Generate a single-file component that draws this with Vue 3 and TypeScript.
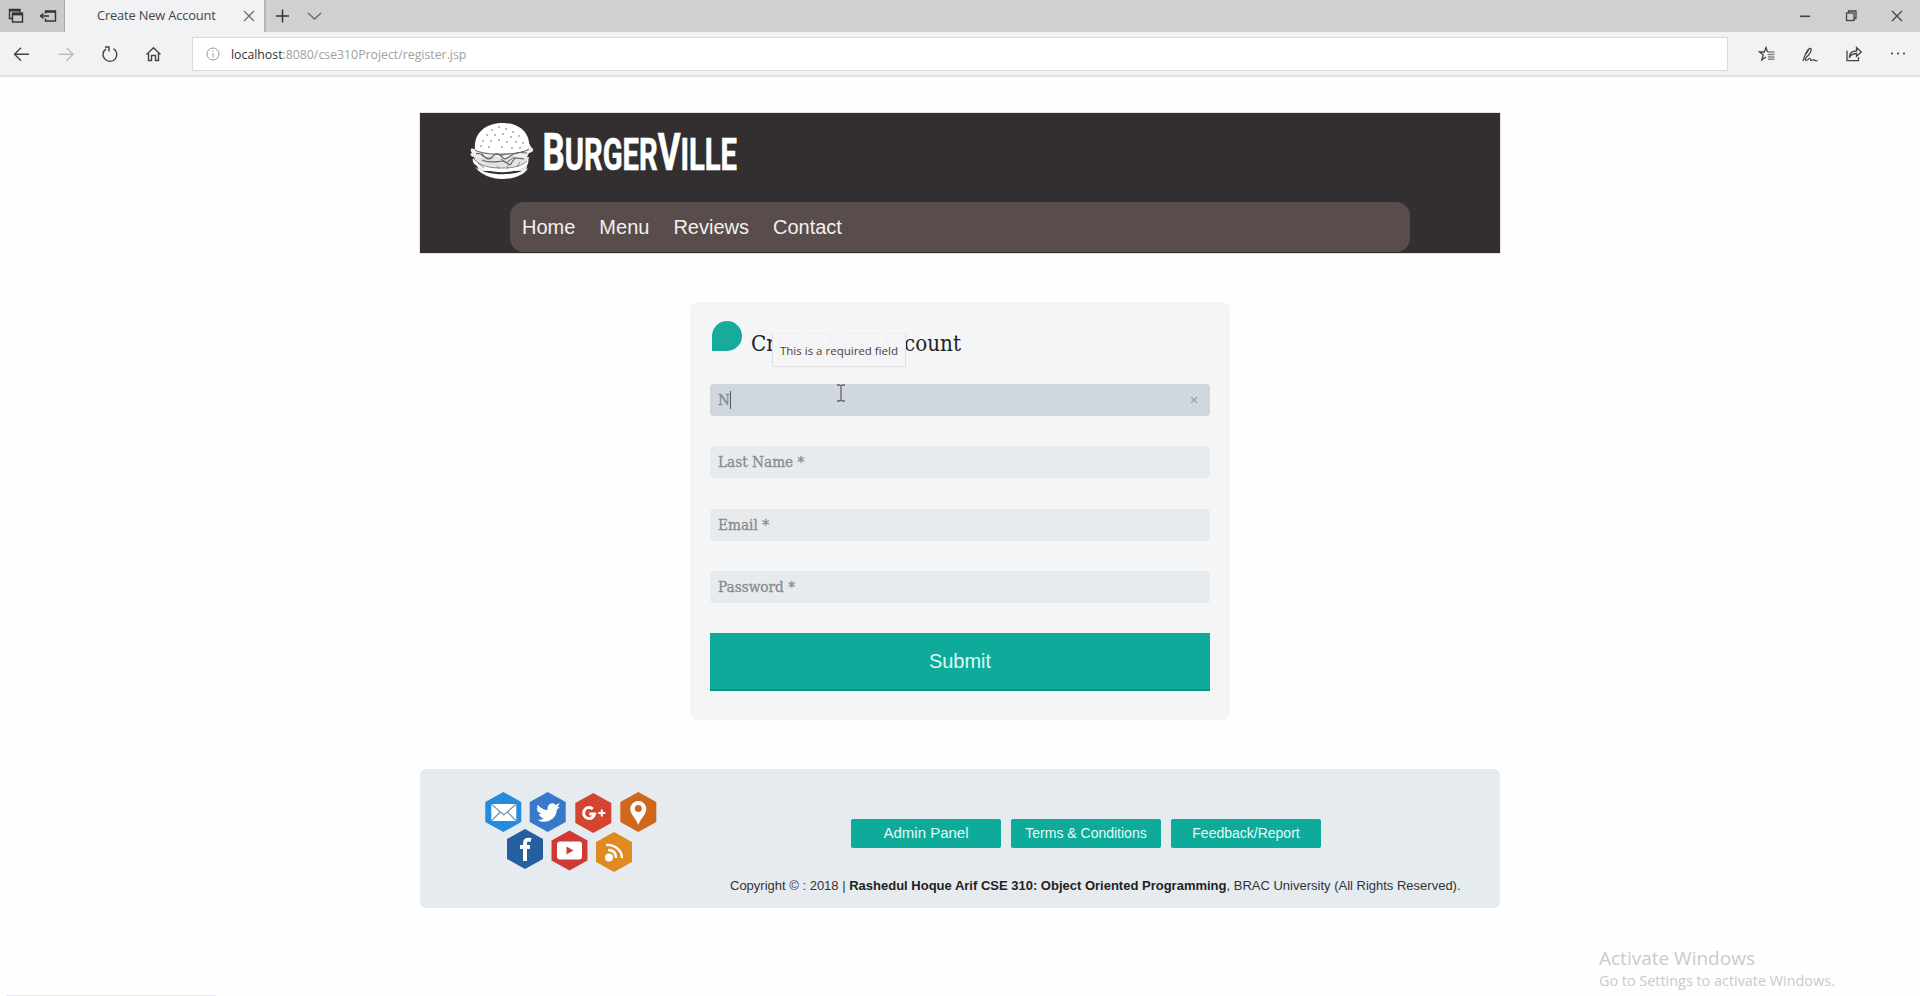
<script setup lang="ts">
import { ref } from 'vue'

interface Field {
  name: string
  placeholder: string
}

const navLinks: string[] = ['Home', 'Menu', 'Reviews', 'Contact']
const fields: Field[] = [
  { name: 'last', placeholder: 'Last Name *' },
  { name: 'email', placeholder: 'Email *' },
  { name: 'password', placeholder: 'Password *' },
]
const firstName = ref('N')
const seeds: number[][] = [
  [20, 7], [27, 4], [34, 6], [41, 9], [15, 12], [23, 12], [31, 11], [39, 14], [47, 13],
  [11, 18], [19, 18], [27, 17], [35, 19], [44, 19], [51, 20], [9, 23], [17, 24], [30, 24], [40, 25], [48, 25],
]
</script>

<template>
  <div class="window">
    <div class="tabstrip">
      <div class="tab-tools">
        <svg width="64" height="32" viewBox="0 0 64 32" fill="none" stroke="#333" stroke-width="1.4">
          <path d="M12 18.500H9.500V9.500H20V12" /><path d="M9.500 10.500H20" stroke-width="2" />
          <rect x="12.500" y="13" width="10" height="9" /><path d="M12.500 14.200H22.500" stroke-width="2.400" />
          <path d="M45.500 13.500V11H55.500V21H45.500V18.500M45.500 12H55.500M40.500 16H49" /><path d="M43.500 13.500L40.500 16l3 2.500" />
        </svg>
      </div>
      <div class="tab">
        <span class="tab-title">Create New Account</span>
        <svg class="tab-close" width="12" height="12" viewBox="0 0 12 12" stroke="#666" stroke-width="1.1"><path d="M1 1l10 10M11 1L1 11" /></svg>
      </div>
      <svg width="70" height="32" viewBox="0 0 70 32" fill="none" stroke="#333" stroke-width="1.5">
        <path d="M10 16h13M16.500 9.500v13" /><path d="M42 13l6.500 6 6.500-6" stroke="#666" stroke-width="1.300" />
      </svg>
      <svg class="window-buttons" width="140" height="32" viewBox="0 0 140 32" fill="none" stroke="#444" stroke-width="1.3">
        <path d="M20 16.300h10" stroke-width="1.600" />
        <rect x="66.500" y="13" width="7.500" height="7.500" /><path d="M68.500 13V11H76V18.500H74" />
        <path d="M112 11l10 10M122 11l-10 10" />
      </svg>
    </div>

    <div class="toolbar">
      <svg width="192" height="43" viewBox="0 32 192 43" fill="none" stroke="#444" stroke-width="1.4">
        <path d="M29 54.300H14.500M21 47.800L14.500 54.300l6.500 6.500" />
        <path d="M58.500 54.300H73M66.500 47.800L73 54.300l-6.500 6.500" stroke="#bbb" />
        <path d="M113.500 48.600a6.900 6.900 0 1 1-7.500 .2M105 47h4v4.500" />
        <path d="M146.500 54.500L153.500 47.800l7 6.700M148.500 53V60.500H151.500V55.500H155.500V60.500H158.500V53" />
      </svg>
      <div class="address">
        <svg width="16" height="16" viewBox="0 0 16 16" fill="none" stroke="#999"><circle cx="8" cy="8" r="6" /><path d="M8 7v4.500M8 4.500v1.300" /></svg>
        <span class="url"><span class="host">localhost</span>:8080/cse310Project/register.jsp</span>
      </div>
      <svg width="192" height="43" viewBox="1728 32 192 43" fill="none" stroke="#444" stroke-width="1.3">
        <path d="M1767.500 52L1766 47.500 1764.300 52H1759.500l3.700 3-1.400 5 4.200-3" />
        <path d="M1768 52h6.500M1767.500 54.500h7M1768 57h6.500M1768 59.300h6.500" stroke="#888" stroke-width="1.500" />
        <path d="M1803 61c2-5 3-11 6.500-12.500 3-.5 1.500 4-1 6.500-1.500 2-4 3.500-3 5 2 1.500 3-2 4.500-1.500s0 2.500 1.500 2 2-1.500 3-.5 2 1 3 .5M1806 54l3-4.500" />
        <path d="M1847 50.500v10.200h11.500V57M1849.500 57c0-4 2.500-6 7-6V47.500l4.800 4.500-4.800 4.300V53.500c-3.500 0-5 .8-7 3.500z" />
        <g fill="#444" stroke="none"><circle cx="1892" cy="53.500" r="1.100" /><circle cx="1898" cy="53.500" r="1.100" /><circle cx="1904" cy="53.500" r="1.100" /></g>
      </svg>
    </div>

    <main class="page">
      <header class="site-header">
        <svg class="logo" width="400" height="72" viewBox="0 0 400 72">
          <g transform="translate(50 10)">
            <path d="M5 27C3 8 18 0 33 0c14 0 28 8 26 26-9 6-44 6-54 1z" fill="#fff" />
            <circle v-for="(s, i) in seeds" :key="i" :cx="s[0] + 2" :cy="s[1]" r=".9" fill="#9c9898" />
            <path d="M4 26c-4-2-4 2-2 4-3 1-1 4 2 4l4 4h47l4-8c4-1 6-3 2-6l-2-4-1 7c-9 5-45 5-54-1z" fill="#eee" />
            <path d="M4 34h55l-3 14H9z" fill="#e4e2e2" />
            <path d="M6 31c5-3 8 5 13 5s4-7 9-5 5 8 11 3 11-5 18-4M12 37c8 4 15 1 22 1l6 4 5-7 9 1" fill="none" stroke="#666" stroke-width="1.200" />
            <path d="M5 27c9 6 44 6 54-1M12 30c2 6 8 7 12 2M31 36l5 4 8-6M28 31l3 2 4-2" fill="none" stroke="#666" />
            <path d="M3 35c4 7 15 10 29 10 13 0 22-3 26-9 2 6-4 8-8 10-11 5-33 4-43-3-3-2-5-4-4-8z" fill="#fff" />
            <path d="M5 44c6 8 17 12 27 12s22-3 26-11c-11 8-40 9-53-1z" fill="#fff" />
            <path d="M4 36c6 7 15 9 28 9 12 0 20-2 25-7M8 40l6 5M27 43l2 3M38 42l-1 4M50 39l-3 5" fill="none" stroke="#888" />
          </g>
          <text class="logo-text" x="122.500" y="56.500" textLength="194.500" lengthAdjust="spacingAndGlyphs"><tspan class="cap">B</tspan>URGER<tspan class="cap">V</tspan>ILLE</text>
        </svg>
        <nav class="nav">
          <a v-for="link in navLinks" :key="link">{{ link }}</a>
        </nav>
      </header>

      <form class="card" @submit.prevent>
        <h1 class="card-title"><span class="leaf"></span><span class="title-text">Create New Account</span></h1>
        <div class="field active">
          <span class="value">{{ firstName }}</span><span class="caret"></span>
          <svg class="clear" width="8" height="8" viewBox="0 0 8 8" stroke="#9aa1a9" stroke-width="1.2"><path d="M1 1l6 6M7 1L1 7" /></svg>
        </div>
        <div v-for="f in fields" :key="f.name" class="field"><span>{{ f.placeholder }}</span></div>
        <button class="submit" type="submit">Submit</button>
        <div class="tooltip">This is a required field</div>
        <svg class="cursor" width="10" height="18" viewBox="0 0 10 18" fill="none" stroke="#666" stroke-width="1.3"><path d="M1 1h2.500L5 2l1.500-1H9M5 2v14M1 17h2.500L5 16l1.500 1H9" /></svg>
      </form>

      <footer class="site-footer">
        <svg class="social" width="240" height="138" viewBox="420 769 240 138">
          <defs><path id="hex" d="M0-20L18-10V10L0 20-18 10V-10z" /></defs>
          <g transform="translate(503.300 812)">
            <use href="#hex" fill="#258bdc" />
            <rect x="-12" y="-8" width="25" height="17" fill="#fff" /><path d="M-12-8L.5 3 13-8M-12 9L-3 0M13 9L4 0" fill="none" stroke="#7799b5" stroke-width="1.300" />
          </g>
          <g transform="translate(547.700 812)">
            <use href="#hex" fill="#3a78cc" />
            <path d="M-10-7C-6-3-3-2 0-2-1-7 4-11 8-7L12-9 10-5 12-5 9-2C9 7-2 13-10 8-7 8-5 7-4 6-7 6-8 4-9 2H-6C-9 1-11-1-11-4l3 1C-11-4-11-6-10-7z" fill="#fff" />
          </g>
          <g transform="translate(593.300 813)">
            <use href="#hex" fill="#d4452f" />
            <path d="M-.5-4A5.500 5.500 0 1 0 1.200 1H-4" fill="none" stroke="#fff" stroke-width="3" /><path d="M5 0h7M8.500-3.500v7" stroke="#fff" stroke-width="2" />
          </g>
          <g transform="translate(638.300 812)">
            <use href="#hex" fill="#cf681d" />
            <path d="M0 13C-2 7-8 2-8-3a8 8 0 0 1 16 0C8 2 2 7 0 13zM0-7a3.500 3.500 0 1 0 0 7 3.500 3.500 0 0 0 0-7z" fill="#fff" fill-rule="evenodd" />
          </g>
          <g transform="translate(525 849)">
            <use href="#hex" fill="#265f9f" />
            <path d="M0 12V-6C0-9 2-10 6-9M-5-2H5" fill="none" stroke="#fff" stroke-width="4" />
          </g>
          <g transform="translate(569.500 850.500)">
            <use href="#hex" fill="#cf3b34" />
            <rect x="-12.500" y="-9" width="25" height="18" rx="3" fill="#fff" /><path d="M-3-4L4 0-3 4z" fill="#cf3b34" />
          </g>
          <g transform="translate(614 852)">
            <use href="#hex" fill="#e08a22" />
            <circle cx="-5" cy="5.500" r="4" fill="#fff" /><path d="M-6-2C-1-2 2 1 2 6M-8-7C0-8 8-2 8 6" fill="none" stroke="#fff" stroke-width="2.400" />
          </g>
        </svg>
        <div class="footer-body">
          <div class="buttons">
            <a class="large">Admin Panel</a><a>Terms &amp; Conditions</a><a>Feedback/Report</a>
          </div>
          <p class="copyright">Copyright © : 2018 | <b>Rashedul Hoque Arif CSE 310: Object Oriented Programming</b>, BRAC University (All Rights Reserved).</p>
        </div>
      </footer>
    </main>

    <div class="watermark">
      <div class="wm-title">Activate Windows</div>
      <div class="wm-sub">Go to Settings to activate Windows.</div>
    </div>
    <div class="status-edge"></div>
  </div>
</template>

<style>
body { margin: 0; background: #fefefe; overflow: hidden; }
</style>

<style scoped>
.window { position: relative; width: 1920px; height: 996px; overflow: hidden; background: #fefefe; font-family: "Liberation Sans", Arial, sans-serif; }
svg { display: block; flex: none; }
.tabstrip { display: flex; height: 32px; background: #d0d0d1; }
.tab-tools { width: 64px; background: #cacacb; border-right: 1px solid #aaa; }
.tab { display: flex; align-items: center; width: 201px; box-sizing: border-box; padding: 0 10px 0 32px; background: #f2f2f4; border-right: 2px solid #b4b4b6; font-family: "Open Sans", sans-serif; font-size: 12.900px; color: #444; }
.tab-title { width: 118px; white-space: nowrap; letter-spacing: -.18px; line-height: 18px; margin-top: -2px; }
.tab-close { margin-left: 28px; }
.window-buttons { margin-left: auto; }
.toolbar { display: flex; height: 45px; box-sizing: border-box; background: #f2f2f4; border-bottom: 2px solid #e2e2e3; }
.address { display: flex; align-items: center; width: 1536px; height: 34px; margin-top: 5px; box-sizing: border-box; border: 1px solid #d9d9da; background: #fff; padding-left: 12px; flex: none; }
.url { margin-left: 10px; padding-top: 2px; font: 12.300px/20px "Open Sans", sans-serif; color: #a0a0a0; white-space: nowrap; }
.host { color: #333; }
.page { width: 1080px; margin: 36px auto 0; }
.site-header { height: 140px; padding-bottom: 1px; box-sizing: border-box; background: #332e2f; display: flex; flex-direction: column; justify-content: space-between; box-shadow: 0 0 1px #555; }
.logo { overflow: visible; }
.logo-text { font-family: Roboto, sans-serif; font-weight: 700; font-size: 43.500px; fill: #fff; stroke: #fff; stroke-width: .7; }
.cap { font-size: 52px; }
.nav { display: flex; gap: 24px; height: 50px; width: 900px; box-sizing: border-box; margin: 0 auto; padding: 0 12px; background: #584d4b; border-radius: 14px; font-size: 20px; line-height: 50px; color: #f4f0ef; }
.card { position: relative; width: 540px; height: 418px; box-sizing: border-box; margin: 49px auto 0; padding: 18px 20px 0; background: #f3f5f7; border-radius: 8px; }
.card-title { display: flex; height: 46px; margin: 0 0 18px; font: 400 22.200px/47px "DejaVu Serif Condensed", "DejaVu Serif", serif; color: #222; }
.leaf { width: 30px; height: 30px; margin: 1px 9px 0 2px; background: #16ab9a; border-radius: 15px 15px 15px 0; }
.title-text { white-space: nowrap; }
.field { display: flex; align-items: center; height: 32px; margin-bottom: 30.300px; padding-left: 8px; border-radius: 4px; background: #e7ebed; color: #868b8e; font: 15.200px/32px "DejaVu Serif Condensed", "DejaVu Serif", serif; -webkit-text-stroke: .3px #868b8e; }
.active { background: #d1d7df; }
.caret { width: 1px; height: 18px; background: #555; }
.clear { margin-left: auto; margin-right: 12px; }
.submit { display: block; width: 100%; height: 58px; padding: 0; border: 0; border-bottom: 2px solid #128f80; background: #0eab9b; color: #dff8f5; font: 20px/56px "Liberation Sans", Arial, sans-serif; }
.tooltip { position: absolute; left: 82px; top: 31px; width: 134px; height: 34px; box-sizing: border-box; border: 1px solid #e0e0e2; border-top-color: #eeeff1; background: rgba(245, 245, 247, .985); font: 11.500px/34px "Open Sans", sans-serif; color: #444; text-align: center; white-space: nowrap; }
.cursor { position: absolute; left: 146px; top: 82px; }
.site-footer { display: flex; height: 139px; margin-top: 49px; background: #e6ebef; border-radius: 6px; }
.footer-body { flex: 1; padding-top: 50px; }
.buttons { display: flex; gap: 10px; margin-left: 191px; }
.buttons a { width: 150px; height: 29px; background: #0eab9b; border-radius: 2px; color: #e3faf7; font-size: 14px; line-height: 29px; text-align: center; }
.buttons .large { font-size: 15px; line-height: 28px; }
.copyright { margin: 30px 0 0 70px; font-size: 13px; line-height: 16px; color: #333; white-space: nowrap; }
.copyright b { color: #222; }
.watermark { position: absolute; left: 1599px; top: 944px; font-family: "Open Sans", sans-serif; color: #cacacc; white-space: nowrap; }
.wm-title { font-size: 19px; line-height: 28px; }
.wm-sub { font-size: 14.400px; line-height: 17px; }
.status-edge { position: absolute; left: 6px; bottom: 0; width: 210px; height: 1px; background: #e6e6ee; }
</style>
